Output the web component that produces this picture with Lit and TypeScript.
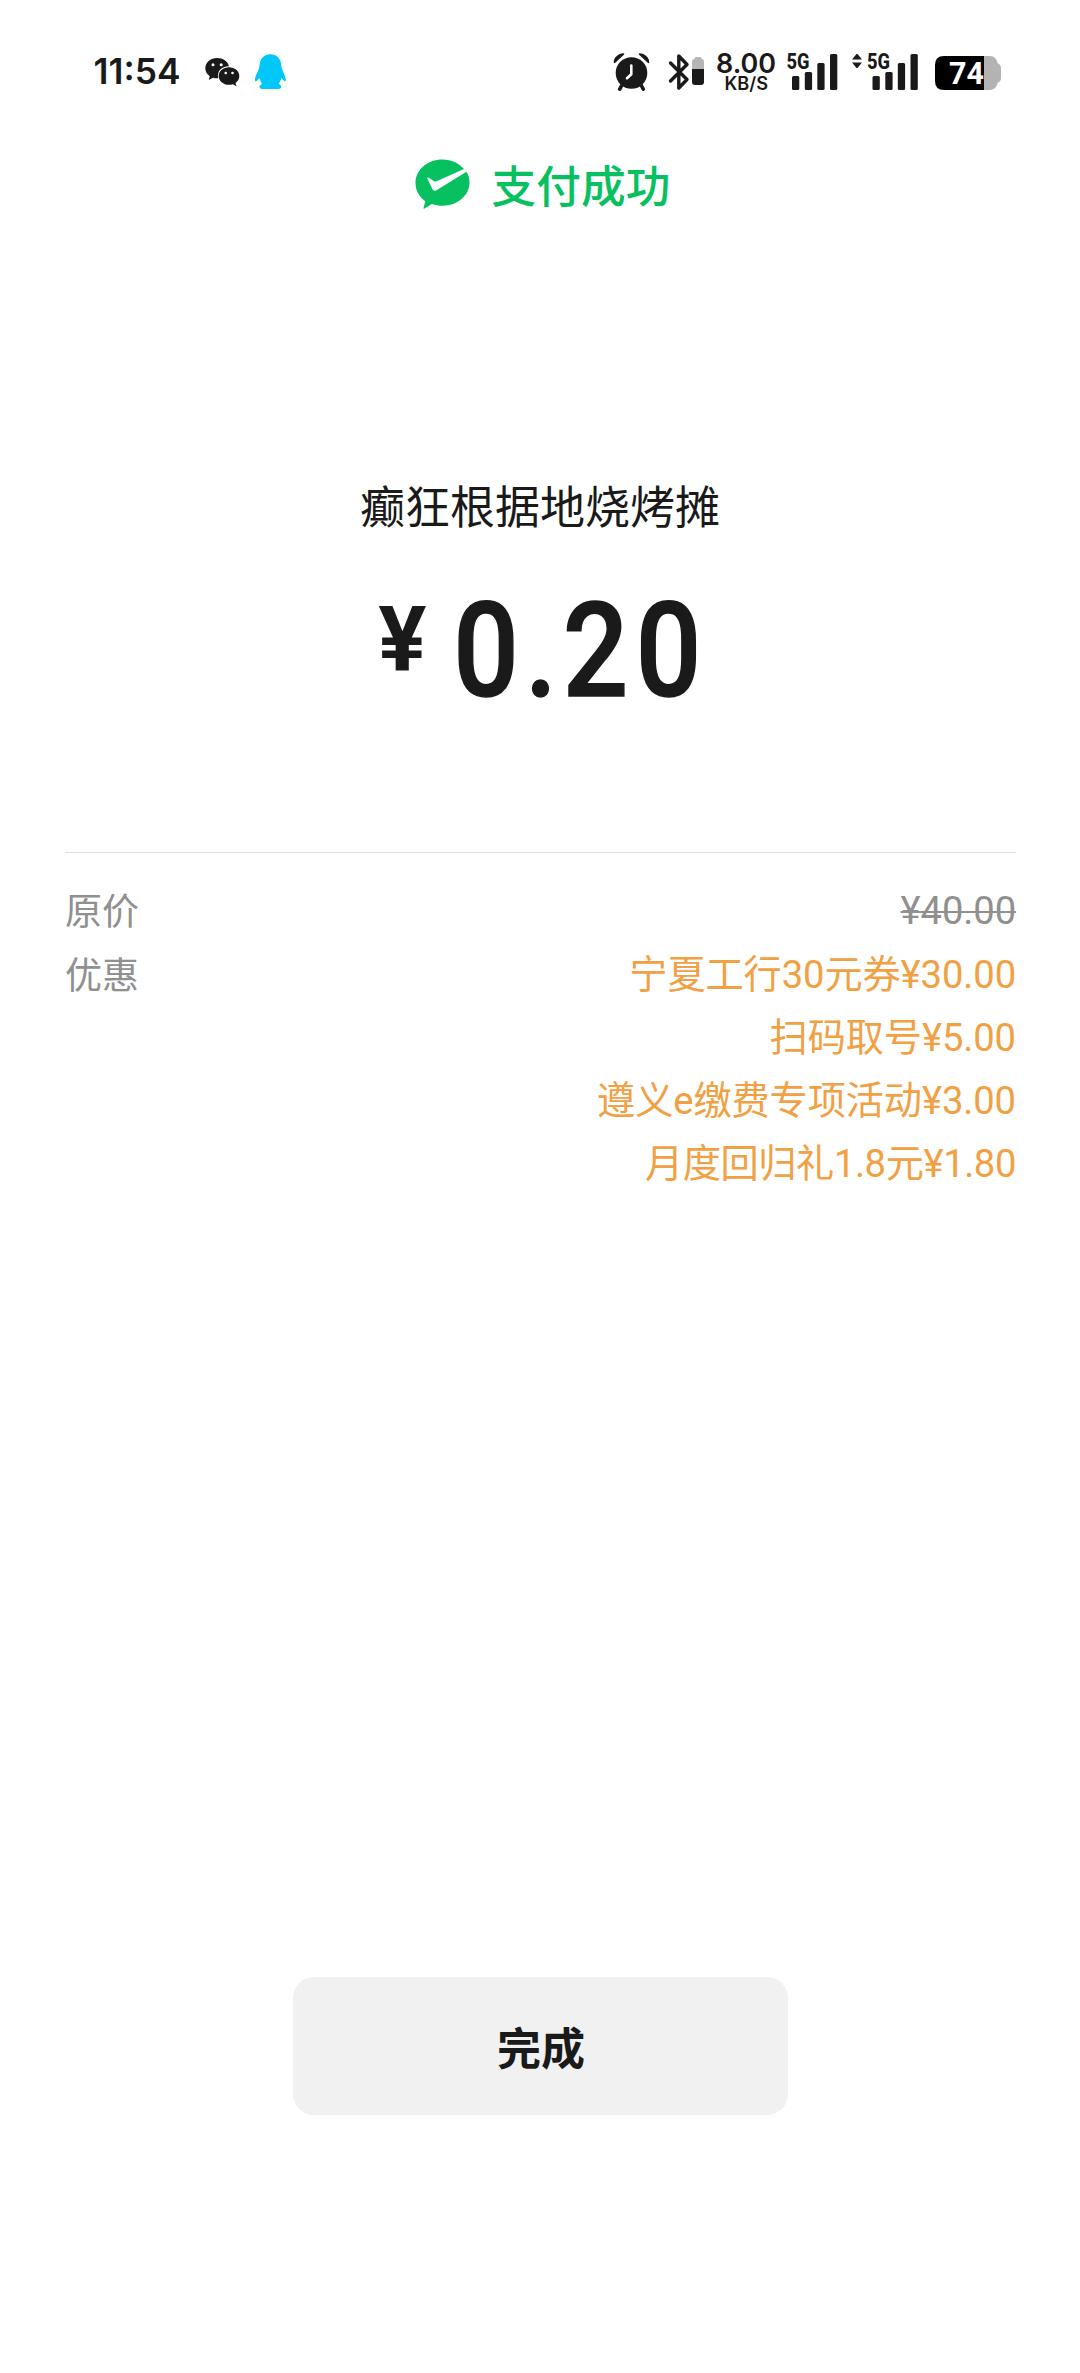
import { LitElement, html, css, svg } from "lit";
import { customElement, property } from "lit/decorators.js";
import { classMap } from "lit/directives/class-map.js";

interface Discount {
  label: string;
  amount: string;
  compact?: boolean;
}

const DISCOUNTS: Discount[] = [
  { label: "宁夏工行30元券", amount: "¥30.00" },
  { label: "扫码取号", amount: "¥5.00" },
  { label: "遵义e缴费专项活动", amount: "¥3.00" },
  { label: "月度回归礼1.8元", amount: "¥1.80", compact: true },
];

@customElement("signal-icon")
class SignalIcon extends LitElement {
  @property({ type: Boolean }) arrows = false;

  static styles = css`
    :host { display: block; }
    svg { display: block; overflow: visible; }
    .tech { font: 800 22.500px Roboto, "Liberation Sans", sans-serif; }
  `;

  render() {
    const shift = this.arrows ? 16 : 0;
    const width = 52 + shift;
    return html`
      <svg width=${width} height="38" viewBox="0 0 ${width} 38" fill="#1a1a1a">
        ${this.arrows ? svg`<path d="M1 6.500L5.500 1h1L11 6.500zM1 9.500h10L6.500 15h-1z" />` : null}
        <g transform="translate(${shift + (this.arrows ? -0.5 : 0)} 0)">
          <text class="tech" x="0.500" y="16" textLength="23" lengthAdjust="spacingAndGlyphs">5G</text>
          <rect x="6" y="23" width="7.300" height="14" rx="1.500" />
          <rect x="18.800" y="19" width="7.300" height="18" rx="1.500" />
          <rect x="31.300" y="10" width="7.300" height="27" rx="1.500" />
          <rect x="44" y="1" width="7.300" height="36" rx="1.500" />
        </g>
      </svg>
    `;
  }
}

@customElement("status-bar")
class StatusBar extends LitElement {
  static styles = css`
    :host {
      display: flex;
      justify-content: space-between;
      height: 92px;
      padding: 0 79px 0 93px;
      align-items: flex-end;
      box-sizing: border-box;
      color: #1a1a1a;
    }
    svg { display: block; overflow: visible; }
    .left, .right { display: flex; align-items: flex-start; height: 39px; }
    .clock { font: 600 35.500px Inter, Roboto, sans-serif; }
    .qq { margin-left: 14px; }
    .bluetooth { margin-left: 19px; }
    .speed { margin-left: 12px; }
    .first { margin-left: 10px; }
    .second { margin-left: 13px; }
    .battery { margin-left: 16px; }
    .rate { font: 600 27px Inter, Roboto, sans-serif; }
    .unit { font: 600 18px Inter, Roboto, sans-serif; }
    .level { font: 700 31px Roboto, sans-serif; fill: #fff; }
  `;

  render() {
    return html`
      <div class="left">
        <svg width="112" height="38" viewBox="0 0 112 38" fill="#1a1a1a">
          <text class="clock" x="0.500" y="31" textLength="87" lengthAdjust="spacingAndGlyphs">11:54</text>
        </svg>
        <svg width="35" height="38" viewBox="0 0 35 38" fill="#1a1a1a">
          <path d="M12 5C5.400 5 .3 9.500.3 15.300c0 3.300 1.700 6 4.400 7.900L3.800 27l4.300-2.300c1.600.5 3.300.7 5.200.5C11.500 18 17 13 24 13.200 22.800 8.300 17.900 5 12 5z" />
          <path d="M24 14.200c-5.800 0-10.300 3.800-10.300 8.700s4.500 8.900 10.300 8.900c1.400 0 2.700-.2 3.900-.6l3.600 2-1-3.300c2.400-1.700 3.800-4.100 3.800-7 0-4.900-4.500-8.700-10.300-8.700z" />
          <g fill="#fff"><circle cx="8" cy="11.800" r="1.500" /><circle cx="16.200" cy="11.800" r="1.500" /><circle cx="20.700" cy="20" r="1.300" /><circle cx="27.500" cy="20" r="1.300" /></g>
        </svg>
        <svg class="qq" width="33" height="38" viewBox="0 0 33 38" fill="#00c8fb">
          <path d="M16.400 1.300C10 1.300 6 5.500 5.600 12 5.200 17.500 1 22.500 1 26.500c0 1.800.8 2.400 1.600 1.500L5.600 25c.5 2.400 1.300 4.300 2.500 5.700-1.700.9-2.500 2-2.500 3.200 0 1.400 1.300 2.100 4.500 2.100h12.600c3.200 0 4.500-.7 4.500-2.100 0-1.200-.8-2.300-2.500-3.200 1.200-1.400 2-3.300 2.500-5.700l3 3c.8.9 1.600.3 1.600-1.500 0-4-4.200-9-4.600-14.500C26.800 5.500 22.800 1.300 16.400 1.300z" />
        </svg>
      </div>
      <div class="right">
        <svg width="37" height="39" viewBox="0 0 37 39">
          <g fill="#1a1a1a">
            <path d="M.8 9.500C.2 5 5.500.2 10.500.3c.9 0 1.100.9.4 1.400L2.300 9.800c-.6.600-1.400.4-1.500-.3z" />
            <path d="M36.200 9.500C36.800 5 31.500.2 26.500.3c-.9 0-1.100.9-.4 1.400l8.600 8.100c.6.600 1.400.4 1.500-.3z" />
            <circle cx="18.500" cy="20" r="15.800" />
          </g>
          <path d="M9 32l-2.300 4.200M28 32l2.300 4.200" stroke="#1a1a1a" stroke-width="3.600" stroke-linecap="round" />
          <path d="M18.300 12.500v8.800l-4.300 4" fill="none" stroke="#fff" stroke-width="2.600" stroke-linecap="round" stroke-linejoin="round" />
        </svg>
        <svg class="bluetooth" width="35" height="39" viewBox="0 0 35 39">
          <path d="M1.500 10L18 26.500 9.800 35V3L18 11.500 1.500 28" fill="none" stroke="#1a1a1a" stroke-width="3.400" stroke-linejoin="round" stroke-linecap="round" />
          <path d="M23 17V8.500Q23 6 25.500 6V5.500Q25.500 4 27 4h4q1.500 0 1.500 1.500V6Q35 6 35 8.500V17z" fill="#b5b5b5" />
          <path d="M23 16h12v13q0 3-3 3h-6q-3 0-3-3z" fill="#1a1a1a" />
        </svg>
        <svg class="speed" width="60" height="39" viewBox="0 0 60 39" fill="#1a1a1a">
          <text class="rate" x="0" y="20" textLength="60" lengthAdjust="spacingAndGlyphs">8.00</text>
          <text class="unit" x="8.500" y="36.500" textLength="43.500" lengthAdjust="spacingAndGlyphs">KB/S</text>
        </svg>
        <signal-icon class="first"></signal-icon>
        <signal-icon class="second" arrows></signal-icon>
        <svg class="battery" width="66" height="39" viewBox="0 0 66 39">
          <path d="M49 3h6q6 0 7.500 7 3.500 1.500 3.500 5v10q0 3.500-3.500 5-1.500 7-7.500 7h-6z" fill="#b3b3b3" />
          <path d="M49 3H9Q0 3 0 12v16q0 9 9 9h40z" />
          <text class="level" x="14" y="31" textLength="35" lengthAdjust="spacingAndGlyphs">74</text>
        </svg>
      </div>
    `;
  }
}

@customElement("app-root")
class AppRoot extends LitElement {
  static styles = css`
    :host {
      display: flex;
      flex-direction: column;
      height: 2373px;
      background: #fff;
      color: #1a1a1a;
      font-family: Roboto, "Noto Sans CJK SC", sans-serif;
    }
    .result {
      display: flex;
      justify-content: center;
      align-items: center;
      gap: 22px;
      height: 66px;
      margin-top: 59px;
      padding-left: 5px;
      color: #07c160;
      font: 500 44.700px/66px "Noto Sans CJK SC", sans-serif;
    }
    .check { display: block; flex: none; margin-top: -1px; }
    .merchant {
      margin-top: 255px;
      text-align: center;
      font: 400 45px/66px "Noto Sans CJK SC", sans-serif;
    }
    .total {
      display: flex;
      justify-content: center;
      align-items: flex-start;
      margin-top: 37px;
      padding-left: 2px;
      height: 154px;
      gap: 25px;
    }
    .currency { font-weight: 700; font-size: 90px; line-height: 132px; }
    .sum { display: block; overflow: visible; margin-top: 15px; }
    .digits {
      font: 500 131px Roboto, sans-serif;
      text-anchor: middle;
      fill: #1a1a1a;
      stroke: #1a1a1a;
      stroke-width: 1.500px;
    }
    .details {
      display: grid;
      grid-template-columns: auto 1fr;
      margin: 123px 64px 0 65px;
      border-top: 1px solid #dedede;
      padding-top: 27px;
      font-size: 38.200px;
      line-height: 63px;
    }
    .label { color: #909090; font-size: 37px; line-height: 62px; padding-top: 2px; }
    .price { color: #909090; text-align: right; }
    .price s { text-decoration-thickness: 2px; letter-spacing: -0.1px; }
    .discounts { display: flex; flex-direction: column; align-items: flex-end; color: #f2a044; }
    .discount { display: flex; height: 63px; white-space: nowrap; letter-spacing: -0.1px; }
    .compact { letter-spacing: -0.400px; }
    .done {
      align-self: center;
      margin-top: auto;
      margin-bottom: 258px;
      width: 495px;
      height: 138px;
      padding: 0 0 0 2px;
      border: 0;
      border-radius: 21px;
      background: #f1f1f1;
      color: #1a1a1a;
      font: 700 44px/66px "Noto Sans CJK SC", sans-serif;
    }
  `;

  render() {
    return html`
      <status-bar></status-bar>
      <div class="result">
        <svg class="check" width="55" height="50" viewBox="0 0 55 50">
          <path fill="#07c160" d="M27.500.5C12.500.5.500 10.800.500 24c0 7.500 3.800 14 9.800 18.300L8.500 49q0 1 1 .5l7.500-4.500c3.300 1.200 6.800 1.800 10.500 1.800 15 0 27-10.200 27-23.200 0-4-1-7.600-3-10.800L21 31.500q-2 1-3.300-1L12.500 20q-.5-2 1.500-1.300l5 3.500q1.200.6 2.500 0L49 10C44 4.200 36.300.500 27.500.5z" />
        </svg>
        <span>支付成功</span>
      </div>
      <div class="merchant">癫狂根据地烧烤摊</div>
      <div class="total">
        <span class="currency">¥</span>
        <svg class="sum" width="252" height="130" viewBox="0 0 252 130">
          <text class="digits" transform="scale(0.88 1)" x="38.600 101.100 163 246" y="106">0.20</text>
        </svg>
      </div>
      <div class="details">
        <span class="label">原价</span>
        <span class="price"><s>¥40.00</s></span>
        <span class="label">优惠</span>
        <div class="discounts">
          ${DISCOUNTS.map(
            (d) => html`<div class=${classMap({ discount: true, compact: !!d.compact })}>
              <span>${d.label}</span><span>${d.amount}</span>
            </div>`
          )}
        </div>
      </div>
      <button class="done">完成</button>
    `;
  }
}
